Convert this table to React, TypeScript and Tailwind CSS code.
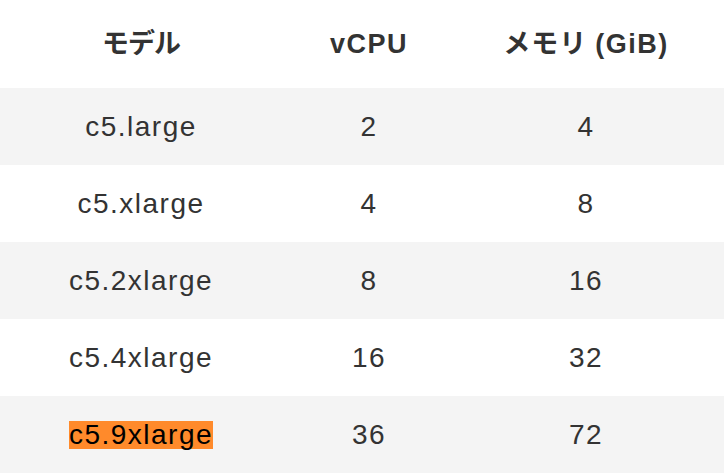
const rows = [
  { model: "c5.large", vcpu: 2, memory: 4 },
  { model: "c5.xlarge", vcpu: 4, memory: 8 },
  { model: "c5.2xlarge", vcpu: 8, memory: 16 },
  { model: "c5.4xlarge", vcpu: 16, memory: 32 },
  { model: "c5.9xlarge", vcpu: 36, memory: 72, highlight: true },
];

const gridCols = "grid grid-cols-[282px_174px_260px] items-center text-center";

export default function App() {
  return (
    <div className="h-[474px] w-[724px] bg-white font-['Liberation_Sans','Noto_Sans_CJK_JP',sans-serif] text-[#333333]">
      <div className={`${gridCols} h-[88px] text-[27px] font-bold`}>
        <div className="tracking-[-1px]">モデル</div>
        <div className="tracking-[1.5px]">vCPU</div>
        <div className="tracking-[1.5px]">
          <span className="tracking-[1px]">メモリ</span>
          <span className="ml-[8px]">(GiB)</span>
        </div>
      </div>
      {rows.map((r, i) => (
        <div
          key={r.model}
          className={`${gridCols} h-[77px] text-[28px] tracking-[1.5px] ${
            i % 2 === 0 ? "bg-[#f4f4f4]" : "bg-white"
          }`}
        >
          <div>
            {r.highlight ? (
              <span className="inline-block h-[28px] bg-[#ff8a2b] leading-[28px] text-black">
                {r.model}
              </span>
            ) : (
              r.model
            )}
          </div>
          <div>{r.vcpu}</div>
          <div>{r.memory}</div>
        </div>
      ))}
    </div>
  );
}
